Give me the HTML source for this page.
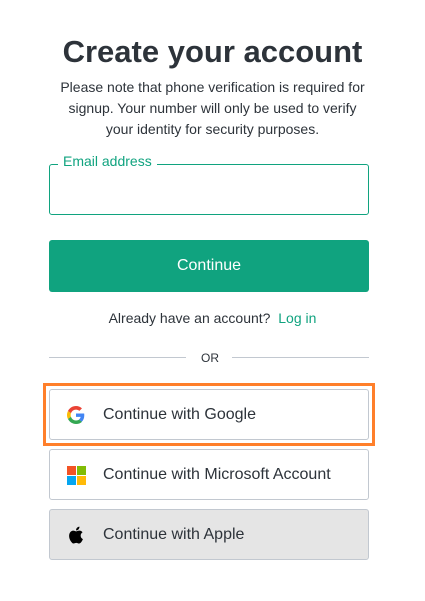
<!DOCTYPE html>
<html><head><style>
body{margin:0;width:425px;height:601px;background:#fff;font-family:"Liberation Sans",sans-serif;color:#2d333a;position:relative;overflow:hidden}
.a{position:absolute}
h1{position:absolute;left:0;width:425px;top:32px;margin:0;text-align:center;font-size:31px;font-weight:bold;color:#2d333a;line-height:40px}
.p{left:54px;width:317px;top:77px;text-align:center;font-size:14px;line-height:21px;color:#2d333a}
.inp{left:49px;top:164px;width:318px;height:49px;border:1px solid #10a37f;border-radius:3px}
.lbl{left:58px;top:152px;background:#fff;padding:0 5px;font-size:14px;color:#10a37f;line-height:18px}
.btn{left:49px;top:240px;width:320px;height:52px;background:#10a37f;border-radius:3px;color:#fff;font-size:16px;text-align:center;line-height:52px}
.al{left:0;width:425px;top:309px;text-align:center;font-size:14px;line-height:18px}
.al span{color:#10a37f}
.ln{height:1px;background:#c2c8d0;top:357px}
.or{left:190px;width:40px;top:350px;text-align:center;font-size:12px;line-height:16px}
.sb{left:49px;width:318px;height:49px;border:1px solid #c2c8d0;border-radius:3px;font-size:16px;line-height:49px}
.sb .t{position:absolute;left:53px;top:0}
.sb svg{position:absolute;left:17px;top:16px}
.hl{left:43px;top:383px;width:326px;height:57px;border:3px solid #ff7f2a}
</style></head><body>
<h1>Create your account</h1>
<div class="a p">Please note that phone verification is required for signup. Your number will only be used to verify your identity for security purposes.</div>
<div class="a inp"></div>
<div class="a lbl">Email address</div>
<div class="a btn">Continue</div>
<div class="a al">Already have an account?&nbsp; <span>Log in</span></div>
<div class="a ln" style="left:49px;width:137px"></div>
<div class="a ln" style="left:232px;width:137px"></div>
<div class="a or">OR</div>
<div class="a hl"></div>
<div class="a sb" style="top:389px"><svg width="18" height="18" viewBox="0 0 48 48"><path fill="#EA4335" d="M24 9.5c3.5 0 6.6 1.2 9.1 3.6l6.8-6.8C35.8 2.4 30.2 0 24 0 14.6 0 6.6 5.4 2.6 13.2l7.9 6.2C12.4 13.7 17.7 9.5 24 9.5z"/><path fill="#4285F4" d="M46.1 24.5c0-1.6-.1-3.1-.4-4.5H24v9h12.4c-.5 2.9-2.2 5.4-4.7 7l7.6 5.9c4.4-4.1 6.8-10.1 6.8-17.4z"/><path fill="#FBBC05" d="M10.5 28.6c-.5-1.4-.8-3-.8-4.6s.3-3.2.8-4.6l-7.9-6.2C.9 16.5 0 20.1 0 24s.9 7.5 2.6 10.8l7.9-6.2z"/><path fill="#34A853" d="M24 48c6.5 0 11.9-2.1 15.9-5.8l-7.6-5.9c-2.1 1.4-4.9 2.3-8.3 2.3-6.3 0-11.6-4.2-13.5-10l-7.9 6.2C6.6 42.6 14.6 48 24 48z"/></svg><span class="t">Continue with Google</span></div>
<div class="a sb" style="top:449px"><svg width="19" height="19" viewBox="0 0 19 19"><rect width="9" height="9" fill="#F35325"/><rect x="10" width="9" height="9" fill="#81BC06"/><rect y="10" width="9" height="9" fill="#05A6F0"/><rect x="10" y="10" width="9" height="9" fill="#FFBA08"/></svg><span class="t">Continue with Microsoft Account</span></div>
<div class="a sb" style="top:509px;background:#e5e5e5"><svg width="20" height="20" viewBox="0 0 24 24" style="top:15px"><path fill="#000" d="M16.4 12.7c0-2.6 2.1-3.8 2.2-3.9-1.2-1.8-3.1-2-3.7-2-1.6-.2-3.1.9-3.9.9-.8 0-2-.9-3.4-.9-1.7 0-3.3 1-4.2 2.6-1.8 3.1-.5 7.7 1.3 10.2.9 1.2 1.9 2.6 3.2 2.6 1.3-.1 1.8-.8 3.3-.8s2 .8 3.4.8c1.4 0 2.3-1.3 3.1-2.5 1-1.4 1.4-2.8 1.4-2.9-.1 0-2.7-1-2.7-4.1zM13.9 5.1c.7-.9 1.2-2 1-3.2-1 0-2.2.7-3 1.5-.6.7-1.2 1.9-1 3.1 1.1.1 2.3-.6 3-1.4z"/></svg><span class="t">Continue with Apple</span></div>
</body></html>
